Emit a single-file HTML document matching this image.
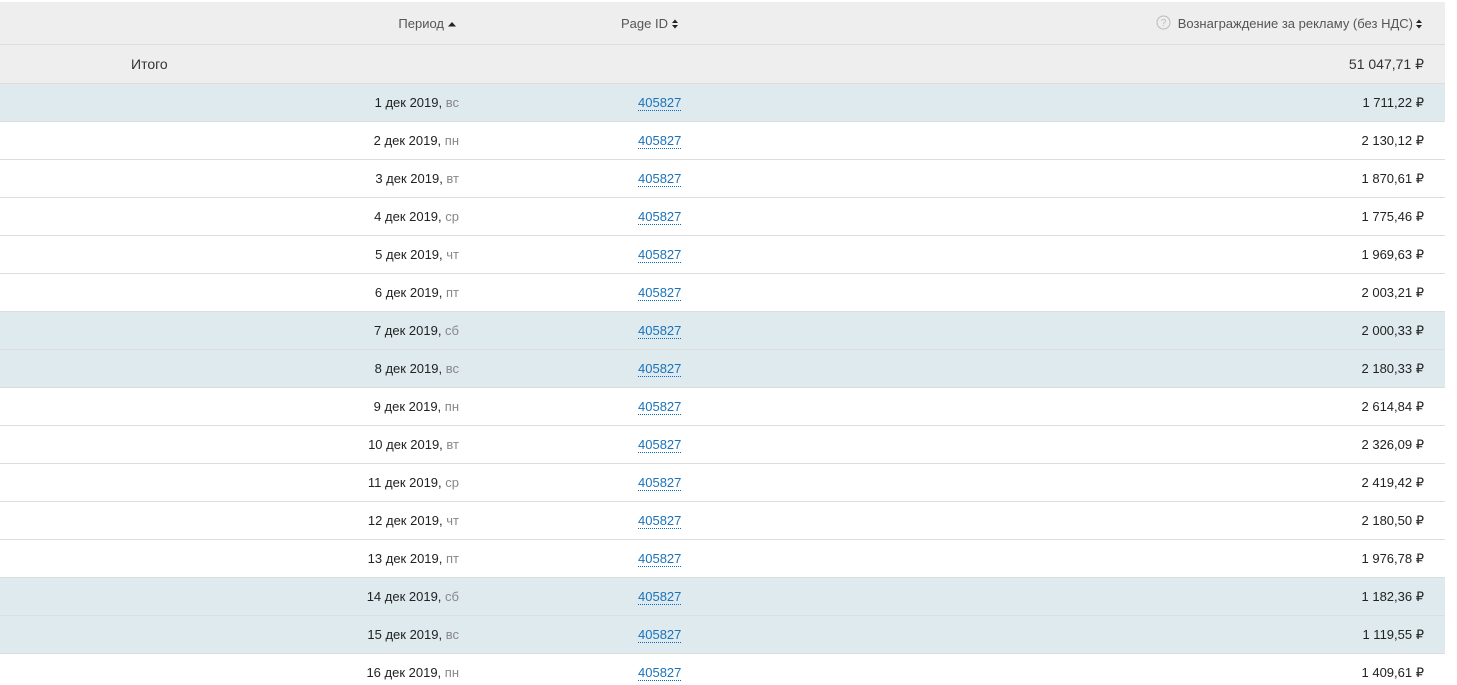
<!DOCTYPE html>
<html lang="ru"><head><meta charset="utf-8"><title>Статистика</title>
<style>
html,body{margin:0;padding:0;background:#fff;width:1457px;height:685px;overflow:hidden}
body{position:relative;font:13px/16px "Liberation Sans",Arial,sans-serif;color:#222}
.r{position:absolute;left:0;width:1445px;box-sizing:border-box;height:38px;border-bottom:1px solid #ddd;background:#fff}
.w{background:#deeaee}
.t{position:absolute;white-space:nowrap;top:11px}
.d{right:986px;text-align:right}
.d i{font-style:normal;color:#888}
.l{left:638px;color:#1a73ba;border-bottom:1px dotted #0b6cc0;line-height:15px}
.m{right:21px}
.h{position:absolute;left:0;width:1445px;box-sizing:border-box;background:#eee;border-bottom:1px solid #ddd}
.h .t{color:#555}
.h .b{font-size:14px;color:#333;top:11px}
svg{position:absolute}
</style></head><body>
<div class="h" style="top:2px;height:43px">
<span class="t" style="right:1001px;top:14px">Период</span>
<svg style="left:448px;top:20px" width="9" height="5"><path d="M0 4.5L4 0L8 4.5Z" fill="#222"/></svg>
<span class="t" style="left:621px;top:14px">Page ID</span>
<svg style="left:672px;top:17px" width="7" height="10"><path d="M0 4L3 .5L6 4ZM0 6L3 9.5L6 6Z" fill="#222"/></svg>
<svg style="left:1156px;top:13px" width="16" height="16"><circle cx="7.5" cy="7.5" r="6.5" fill="none" stroke="#bbb"/><text x="7.5" y="11" font-size="10" text-anchor="middle" fill="#bbb" font-family="Liberation Sans">?</text></svg>
<span class="t" style="right:32px;top:14px">Вознаграждение за рекламу (без НДС)</span>
<svg style="left:1416px;top:17px" width="7" height="10"><path d="M0 4L3 .5L6 4ZM0 6L3 9.5L6 6Z" fill="#222"/></svg>
</div>
<div class="h" style="top:45px;height:39px">
<span class="t b" style="left:131px">Итого</span>
<span class="t m b">51 047,71 ₽</span>
</div>
<div class="r w" style="top:84px"><span class="t d">1 дек 2019, <i>вс</i></span><span class="t l">405827</span><span class="t m">1 711,22 ₽</span></div>
<div class="r" style="top:122px"><span class="t d">2 дек 2019, <i>пн</i></span><span class="t l">405827</span><span class="t m">2 130,12 ₽</span></div>
<div class="r" style="top:160px"><span class="t d">3 дек 2019, <i>вт</i></span><span class="t l">405827</span><span class="t m">1 870,61 ₽</span></div>
<div class="r" style="top:198px"><span class="t d">4 дек 2019, <i>ср</i></span><span class="t l">405827</span><span class="t m">1 775,46 ₽</span></div>
<div class="r" style="top:236px"><span class="t d">5 дек 2019, <i>чт</i></span><span class="t l">405827</span><span class="t m">1 969,63 ₽</span></div>
<div class="r" style="top:274px"><span class="t d">6 дек 2019, <i>пт</i></span><span class="t l">405827</span><span class="t m">2 003,21 ₽</span></div>
<div class="r w" style="top:312px"><span class="t d">7 дек 2019, <i>сб</i></span><span class="t l">405827</span><span class="t m">2 000,33 ₽</span></div>
<div class="r w" style="top:350px"><span class="t d">8 дек 2019, <i>вс</i></span><span class="t l">405827</span><span class="t m">2 180,33 ₽</span></div>
<div class="r" style="top:388px"><span class="t d">9 дек 2019, <i>пн</i></span><span class="t l">405827</span><span class="t m">2 614,84 ₽</span></div>
<div class="r" style="top:426px"><span class="t d">10 дек 2019, <i>вт</i></span><span class="t l">405827</span><span class="t m">2 326,09 ₽</span></div>
<div class="r" style="top:464px"><span class="t d">11 дек 2019, <i>ср</i></span><span class="t l">405827</span><span class="t m">2 419,42 ₽</span></div>
<div class="r" style="top:502px"><span class="t d">12 дек 2019, <i>чт</i></span><span class="t l">405827</span><span class="t m">2 180,50 ₽</span></div>
<div class="r" style="top:540px"><span class="t d">13 дек 2019, <i>пт</i></span><span class="t l">405827</span><span class="t m">1 976,78 ₽</span></div>
<div class="r w" style="top:578px"><span class="t d">14 дек 2019, <i>сб</i></span><span class="t l">405827</span><span class="t m">1 182,36 ₽</span></div>
<div class="r w" style="top:616px"><span class="t d">15 дек 2019, <i>вс</i></span><span class="t l">405827</span><span class="t m">1 119,55 ₽</span></div>
<div class="r" style="top:654px"><span class="t d">16 дек 2019, <i>пн</i></span><span class="t l">405827</span><span class="t m">1 409,61 ₽</span></div>
</body></html>
